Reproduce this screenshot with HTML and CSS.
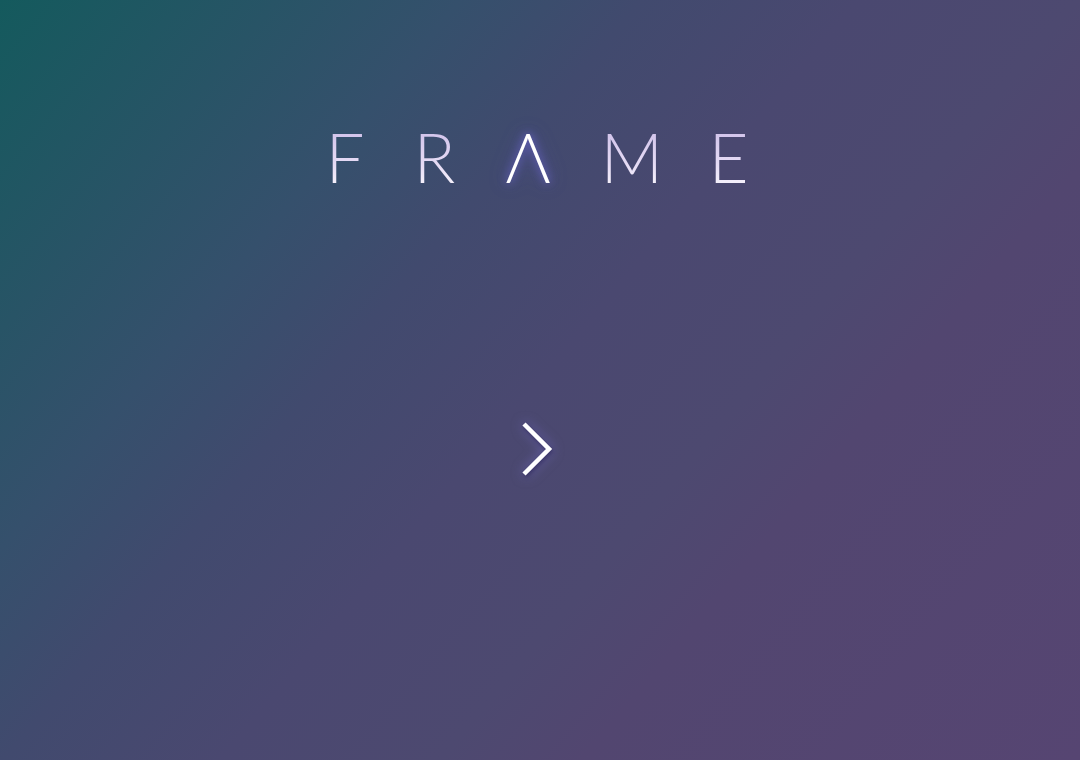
FILE: index.html
```html
<!DOCTYPE html>
<html lang="en">
<head>
<meta charset="utf-8">
<title>Frame</title>
<link rel="stylesheet" href="styles.css">
</head>
<body>
<main class="screen">
  <h1 class="logo"><span class="ch ch-f">F</span><span class="ch ch-r">R</span><span class="ch ch-a glow">Λ</span><span class="ch ch-m">M</span><span class="ch ch-e">E</span></h1>
  <button class="next" aria-label="Next">
    <svg width="40" height="60" viewBox="0 0 40 60"><path d="M8 4 L33 29 L8 54" fill="none" stroke="#ffffff" stroke-width="4.5" stroke-linecap="butt" stroke-linejoin="miter"/></svg>
  </button>
</main>
</body>
</html>
```
FILE: styles.css
```css
html, body {
  margin: 0;
  padding: 0;
  width: 1080px;
  height: 760px;
  overflow: hidden;
}
body {
  font-family: "Lato", "Open Sans", sans-serif;
  background: linear-gradient(130deg, #145a5d 0%, #35506c 26.8%, #414a6e 37.3%, #4a4870 50%, #4d4970 62.7%, #524670 71%, #564572 100%);
}
.screen {
  width: 1080px;
  height: 760px;
  display: flex;
  flex-direction: column;
  align-items: center;
}
.logo {
  margin: 117px 0 0 0;
  display: flex;
  font-weight: 300;
  font-size: 69px;
  line-height: 80px;
}
.ch {
  display: block;
  background: linear-gradient(180deg, #c9b9e6 0%, #e6dcf5 60%, #ffffff 100%);
  -webkit-background-clip: text;
  background-clip: text;
  color: transparent;
}
.ch-f { width: 88px; }
.ch-r { width: 92px; }
.ch-a { width: 95px; }
.ch-m { width: 108px; }
.ch-e { width: 46px; }
.ch.glow {
  color: #ffffff;
  background: none;
  text-shadow: 0 0 10px rgba(120, 110, 235, 0.85), 0 0 20px rgba(110, 100, 225, 0.45);
}
.next {
  margin-top: 223px;
  margin-right: 8px;
  background: none;
  border: 0;
  padding: 0;
  cursor: pointer;
  filter: drop-shadow(1px 2px 2px rgba(20, 10, 60, 0.45)) drop-shadow(0 0 6px rgba(140, 130, 240, 0.5));
}
.next svg { display: block; }
```
